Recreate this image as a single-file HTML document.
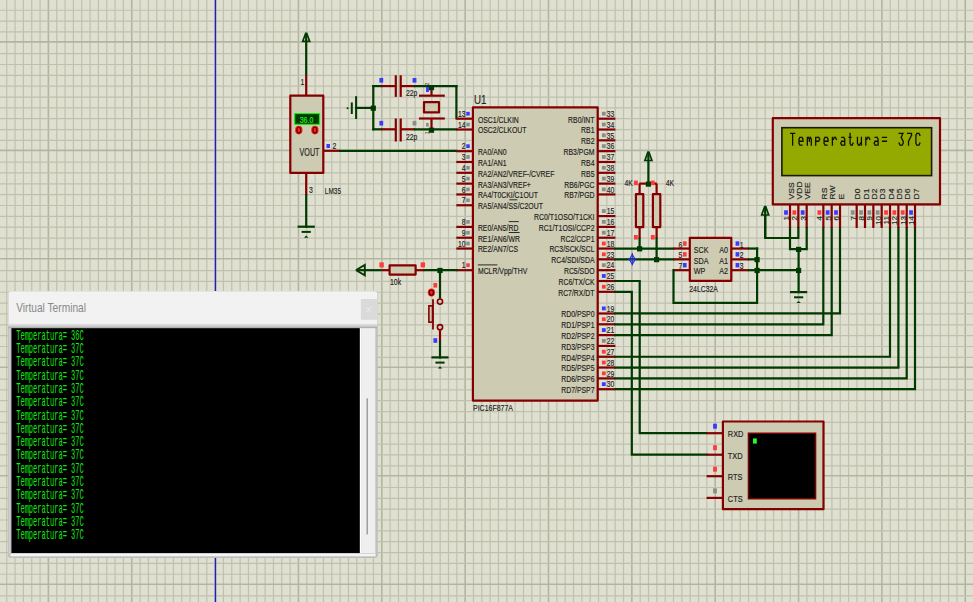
<!DOCTYPE html>
<html><head><meta charset="utf-8"><style>
html,body{margin:0;padding:0;background:#e0e0d1;overflow:hidden}
svg{display:block}
text{font-family:"Liberation Sans", sans-serif}
</style></head><body>
<svg width="973" height="602" viewBox="0 0 973 602">
<rect x="0" y="0" width="973" height="602" fill="#e0e0d1"/>
<line x1="-1.61" y1="0" x2="-1.61" y2="602" stroke="#bfc0ae" stroke-width="1.2"/>
<line x1="6.72" y1="0" x2="6.72" y2="602" stroke="#bfc0ae" stroke-width="1.2"/>
<line x1="15.06" y1="0" x2="15.06" y2="602" stroke="#bfc0ae" stroke-width="1.2"/>
<line x1="23.39" y1="0" x2="23.39" y2="602" stroke="#bfc0ae" stroke-width="1.2"/>
<line x1="31.73" y1="0" x2="31.73" y2="602" stroke="#bfc0ae" stroke-width="1.2"/>
<line x1="40.06" y1="0" x2="40.06" y2="602" stroke="#bfc0ae" stroke-width="1.2"/>
<line x1="48.40" y1="0" x2="48.40" y2="602" stroke="#b3b5a3" stroke-width="1.6"/>
<line x1="56.73" y1="0" x2="56.73" y2="602" stroke="#bfc0ae" stroke-width="1.2"/>
<line x1="65.07" y1="0" x2="65.07" y2="602" stroke="#bfc0ae" stroke-width="1.2"/>
<line x1="73.41" y1="0" x2="73.41" y2="602" stroke="#bfc0ae" stroke-width="1.2"/>
<line x1="81.74" y1="0" x2="81.74" y2="602" stroke="#bfc0ae" stroke-width="1.2"/>
<line x1="90.08" y1="0" x2="90.08" y2="602" stroke="#bfc0ae" stroke-width="1.2"/>
<line x1="98.41" y1="0" x2="98.41" y2="602" stroke="#bfc0ae" stroke-width="1.2"/>
<line x1="106.75" y1="0" x2="106.75" y2="602" stroke="#bfc0ae" stroke-width="1.2"/>
<line x1="115.08" y1="0" x2="115.08" y2="602" stroke="#bfc0ae" stroke-width="1.2"/>
<line x1="123.42" y1="0" x2="123.42" y2="602" stroke="#bfc0ae" stroke-width="1.2"/>
<line x1="131.75" y1="0" x2="131.75" y2="602" stroke="#b3b5a3" stroke-width="1.6"/>
<line x1="140.09" y1="0" x2="140.09" y2="602" stroke="#bfc0ae" stroke-width="1.2"/>
<line x1="148.42" y1="0" x2="148.42" y2="602" stroke="#bfc0ae" stroke-width="1.2"/>
<line x1="156.76" y1="0" x2="156.76" y2="602" stroke="#bfc0ae" stroke-width="1.2"/>
<line x1="165.09" y1="0" x2="165.09" y2="602" stroke="#bfc0ae" stroke-width="1.2"/>
<line x1="173.43" y1="0" x2="173.43" y2="602" stroke="#bfc0ae" stroke-width="1.2"/>
<line x1="181.76" y1="0" x2="181.76" y2="602" stroke="#bfc0ae" stroke-width="1.2"/>
<line x1="190.10" y1="0" x2="190.10" y2="602" stroke="#bfc0ae" stroke-width="1.2"/>
<line x1="198.43" y1="0" x2="198.43" y2="602" stroke="#bfc0ae" stroke-width="1.2"/>
<line x1="206.77" y1="0" x2="206.77" y2="602" stroke="#bfc0ae" stroke-width="1.2"/>
<line x1="215.10" y1="0" x2="215.10" y2="602" stroke="#b3b5a3" stroke-width="1.6"/>
<line x1="223.44" y1="0" x2="223.44" y2="602" stroke="#bfc0ae" stroke-width="1.2"/>
<line x1="231.77" y1="0" x2="231.77" y2="602" stroke="#bfc0ae" stroke-width="1.2"/>
<line x1="240.11" y1="0" x2="240.11" y2="602" stroke="#bfc0ae" stroke-width="1.2"/>
<line x1="248.44" y1="0" x2="248.44" y2="602" stroke="#bfc0ae" stroke-width="1.2"/>
<line x1="256.78" y1="0" x2="256.78" y2="602" stroke="#bfc0ae" stroke-width="1.2"/>
<line x1="265.11" y1="0" x2="265.11" y2="602" stroke="#bfc0ae" stroke-width="1.2"/>
<line x1="273.44" y1="0" x2="273.44" y2="602" stroke="#bfc0ae" stroke-width="1.2"/>
<line x1="281.78" y1="0" x2="281.78" y2="602" stroke="#bfc0ae" stroke-width="1.2"/>
<line x1="290.12" y1="0" x2="290.12" y2="602" stroke="#bfc0ae" stroke-width="1.2"/>
<line x1="298.45" y1="0" x2="298.45" y2="602" stroke="#b3b5a3" stroke-width="1.6"/>
<line x1="306.79" y1="0" x2="306.79" y2="602" stroke="#bfc0ae" stroke-width="1.2"/>
<line x1="315.12" y1="0" x2="315.12" y2="602" stroke="#bfc0ae" stroke-width="1.2"/>
<line x1="323.45" y1="0" x2="323.45" y2="602" stroke="#bfc0ae" stroke-width="1.2"/>
<line x1="331.79" y1="0" x2="331.79" y2="602" stroke="#bfc0ae" stroke-width="1.2"/>
<line x1="340.12" y1="0" x2="340.12" y2="602" stroke="#bfc0ae" stroke-width="1.2"/>
<line x1="348.46" y1="0" x2="348.46" y2="602" stroke="#bfc0ae" stroke-width="1.2"/>
<line x1="356.80" y1="0" x2="356.80" y2="602" stroke="#bfc0ae" stroke-width="1.2"/>
<line x1="365.13" y1="0" x2="365.13" y2="602" stroke="#bfc0ae" stroke-width="1.2"/>
<line x1="373.47" y1="0" x2="373.47" y2="602" stroke="#bfc0ae" stroke-width="1.2"/>
<line x1="381.80" y1="0" x2="381.80" y2="602" stroke="#b3b5a3" stroke-width="1.6"/>
<line x1="390.13" y1="0" x2="390.13" y2="602" stroke="#bfc0ae" stroke-width="1.2"/>
<line x1="398.47" y1="0" x2="398.47" y2="602" stroke="#bfc0ae" stroke-width="1.2"/>
<line x1="406.81" y1="0" x2="406.81" y2="602" stroke="#bfc0ae" stroke-width="1.2"/>
<line x1="415.14" y1="0" x2="415.14" y2="602" stroke="#bfc0ae" stroke-width="1.2"/>
<line x1="423.48" y1="0" x2="423.48" y2="602" stroke="#bfc0ae" stroke-width="1.2"/>
<line x1="431.81" y1="0" x2="431.81" y2="602" stroke="#bfc0ae" stroke-width="1.2"/>
<line x1="440.15" y1="0" x2="440.15" y2="602" stroke="#bfc0ae" stroke-width="1.2"/>
<line x1="448.48" y1="0" x2="448.48" y2="602" stroke="#bfc0ae" stroke-width="1.2"/>
<line x1="456.81" y1="0" x2="456.81" y2="602" stroke="#bfc0ae" stroke-width="1.2"/>
<line x1="465.15" y1="0" x2="465.15" y2="602" stroke="#b3b5a3" stroke-width="1.6"/>
<line x1="473.49" y1="0" x2="473.49" y2="602" stroke="#bfc0ae" stroke-width="1.2"/>
<line x1="481.82" y1="0" x2="481.82" y2="602" stroke="#bfc0ae" stroke-width="1.2"/>
<line x1="490.16" y1="0" x2="490.16" y2="602" stroke="#bfc0ae" stroke-width="1.2"/>
<line x1="498.49" y1="0" x2="498.49" y2="602" stroke="#bfc0ae" stroke-width="1.2"/>
<line x1="506.83" y1="0" x2="506.83" y2="602" stroke="#bfc0ae" stroke-width="1.2"/>
<line x1="515.16" y1="0" x2="515.16" y2="602" stroke="#bfc0ae" stroke-width="1.2"/>
<line x1="523.50" y1="0" x2="523.50" y2="602" stroke="#bfc0ae" stroke-width="1.2"/>
<line x1="531.83" y1="0" x2="531.83" y2="602" stroke="#bfc0ae" stroke-width="1.2"/>
<line x1="540.17" y1="0" x2="540.17" y2="602" stroke="#bfc0ae" stroke-width="1.2"/>
<line x1="548.50" y1="0" x2="548.50" y2="602" stroke="#b3b5a3" stroke-width="1.6"/>
<line x1="556.84" y1="0" x2="556.84" y2="602" stroke="#bfc0ae" stroke-width="1.2"/>
<line x1="565.17" y1="0" x2="565.17" y2="602" stroke="#bfc0ae" stroke-width="1.2"/>
<line x1="573.50" y1="0" x2="573.50" y2="602" stroke="#bfc0ae" stroke-width="1.2"/>
<line x1="581.84" y1="0" x2="581.84" y2="602" stroke="#bfc0ae" stroke-width="1.2"/>
<line x1="590.18" y1="0" x2="590.18" y2="602" stroke="#bfc0ae" stroke-width="1.2"/>
<line x1="598.51" y1="0" x2="598.51" y2="602" stroke="#bfc0ae" stroke-width="1.2"/>
<line x1="606.85" y1="0" x2="606.85" y2="602" stroke="#bfc0ae" stroke-width="1.2"/>
<line x1="615.18" y1="0" x2="615.18" y2="602" stroke="#bfc0ae" stroke-width="1.2"/>
<line x1="623.51" y1="0" x2="623.51" y2="602" stroke="#bfc0ae" stroke-width="1.2"/>
<line x1="631.85" y1="0" x2="631.85" y2="602" stroke="#b3b5a3" stroke-width="1.6"/>
<line x1="640.19" y1="0" x2="640.19" y2="602" stroke="#bfc0ae" stroke-width="1.2"/>
<line x1="648.52" y1="0" x2="648.52" y2="602" stroke="#bfc0ae" stroke-width="1.2"/>
<line x1="656.86" y1="0" x2="656.86" y2="602" stroke="#bfc0ae" stroke-width="1.2"/>
<line x1="665.19" y1="0" x2="665.19" y2="602" stroke="#bfc0ae" stroke-width="1.2"/>
<line x1="673.53" y1="0" x2="673.53" y2="602" stroke="#bfc0ae" stroke-width="1.2"/>
<line x1="681.86" y1="0" x2="681.86" y2="602" stroke="#bfc0ae" stroke-width="1.2"/>
<line x1="690.20" y1="0" x2="690.20" y2="602" stroke="#bfc0ae" stroke-width="1.2"/>
<line x1="698.53" y1="0" x2="698.53" y2="602" stroke="#bfc0ae" stroke-width="1.2"/>
<line x1="706.87" y1="0" x2="706.87" y2="602" stroke="#bfc0ae" stroke-width="1.2"/>
<line x1="715.20" y1="0" x2="715.20" y2="602" stroke="#b3b5a3" stroke-width="1.6"/>
<line x1="723.54" y1="0" x2="723.54" y2="602" stroke="#bfc0ae" stroke-width="1.2"/>
<line x1="731.87" y1="0" x2="731.87" y2="602" stroke="#bfc0ae" stroke-width="1.2"/>
<line x1="740.21" y1="0" x2="740.21" y2="602" stroke="#bfc0ae" stroke-width="1.2"/>
<line x1="748.54" y1="0" x2="748.54" y2="602" stroke="#bfc0ae" stroke-width="1.2"/>
<line x1="756.88" y1="0" x2="756.88" y2="602" stroke="#bfc0ae" stroke-width="1.2"/>
<line x1="765.21" y1="0" x2="765.21" y2="602" stroke="#bfc0ae" stroke-width="1.2"/>
<line x1="773.55" y1="0" x2="773.55" y2="602" stroke="#bfc0ae" stroke-width="1.2"/>
<line x1="781.88" y1="0" x2="781.88" y2="602" stroke="#bfc0ae" stroke-width="1.2"/>
<line x1="790.22" y1="0" x2="790.22" y2="602" stroke="#bfc0ae" stroke-width="1.2"/>
<line x1="798.55" y1="0" x2="798.55" y2="602" stroke="#b3b5a3" stroke-width="1.6"/>
<line x1="806.89" y1="0" x2="806.89" y2="602" stroke="#bfc0ae" stroke-width="1.2"/>
<line x1="815.22" y1="0" x2="815.22" y2="602" stroke="#bfc0ae" stroke-width="1.2"/>
<line x1="823.56" y1="0" x2="823.56" y2="602" stroke="#bfc0ae" stroke-width="1.2"/>
<line x1="831.89" y1="0" x2="831.89" y2="602" stroke="#bfc0ae" stroke-width="1.2"/>
<line x1="840.23" y1="0" x2="840.23" y2="602" stroke="#bfc0ae" stroke-width="1.2"/>
<line x1="848.56" y1="0" x2="848.56" y2="602" stroke="#bfc0ae" stroke-width="1.2"/>
<line x1="856.90" y1="0" x2="856.90" y2="602" stroke="#bfc0ae" stroke-width="1.2"/>
<line x1="865.23" y1="0" x2="865.23" y2="602" stroke="#bfc0ae" stroke-width="1.2"/>
<line x1="873.57" y1="0" x2="873.57" y2="602" stroke="#bfc0ae" stroke-width="1.2"/>
<line x1="881.90" y1="0" x2="881.90" y2="602" stroke="#b3b5a3" stroke-width="1.6"/>
<line x1="890.24" y1="0" x2="890.24" y2="602" stroke="#bfc0ae" stroke-width="1.2"/>
<line x1="898.57" y1="0" x2="898.57" y2="602" stroke="#bfc0ae" stroke-width="1.2"/>
<line x1="906.91" y1="0" x2="906.91" y2="602" stroke="#bfc0ae" stroke-width="1.2"/>
<line x1="915.24" y1="0" x2="915.24" y2="602" stroke="#bfc0ae" stroke-width="1.2"/>
<line x1="923.58" y1="0" x2="923.58" y2="602" stroke="#bfc0ae" stroke-width="1.2"/>
<line x1="931.91" y1="0" x2="931.91" y2="602" stroke="#bfc0ae" stroke-width="1.2"/>
<line x1="940.25" y1="0" x2="940.25" y2="602" stroke="#bfc0ae" stroke-width="1.2"/>
<line x1="948.58" y1="0" x2="948.58" y2="602" stroke="#bfc0ae" stroke-width="1.2"/>
<line x1="956.92" y1="0" x2="956.92" y2="602" stroke="#bfc0ae" stroke-width="1.2"/>
<line x1="965.25" y1="0" x2="965.25" y2="602" stroke="#b3b5a3" stroke-width="1.6"/>
<line x1="973.59" y1="0" x2="973.59" y2="602" stroke="#bfc0ae" stroke-width="1.2"/>
<line x1="0" y1="-0.58" x2="973" y2="-0.58" stroke="#bfc0ae" stroke-width="1.2"/>
<line x1="0" y1="10.26" x2="973" y2="10.26" stroke="#bfc0ae" stroke-width="1.2"/>
<line x1="0" y1="21.11" x2="973" y2="21.11" stroke="#bfc0ae" stroke-width="1.2"/>
<line x1="0" y1="31.95" x2="973" y2="31.95" stroke="#bfc0ae" stroke-width="1.2"/>
<line x1="0" y1="41.90" x2="973" y2="41.90" stroke="#b3b5a3" stroke-width="1.6"/>
<line x1="0" y1="53.65" x2="973" y2="53.65" stroke="#bfc0ae" stroke-width="1.2"/>
<line x1="0" y1="64.49" x2="973" y2="64.49" stroke="#bfc0ae" stroke-width="1.2"/>
<line x1="0" y1="75.34" x2="973" y2="75.34" stroke="#bfc0ae" stroke-width="1.2"/>
<line x1="0" y1="86.18" x2="973" y2="86.18" stroke="#bfc0ae" stroke-width="1.2"/>
<line x1="0" y1="97.03" x2="973" y2="97.03" stroke="#bfc0ae" stroke-width="1.2"/>
<line x1="0" y1="107.88" x2="973" y2="107.88" stroke="#bfc0ae" stroke-width="1.2"/>
<line x1="0" y1="118.72" x2="973" y2="118.72" stroke="#bfc0ae" stroke-width="1.2"/>
<line x1="0" y1="129.57" x2="973" y2="129.57" stroke="#bfc0ae" stroke-width="1.2"/>
<line x1="0" y1="140.41" x2="973" y2="140.41" stroke="#bfc0ae" stroke-width="1.2"/>
<line x1="0" y1="150.36" x2="973" y2="150.36" stroke="#b3b5a3" stroke-width="1.6"/>
<line x1="0" y1="162.11" x2="973" y2="162.11" stroke="#bfc0ae" stroke-width="1.2"/>
<line x1="0" y1="172.95" x2="973" y2="172.95" stroke="#bfc0ae" stroke-width="1.2"/>
<line x1="0" y1="183.80" x2="973" y2="183.80" stroke="#bfc0ae" stroke-width="1.2"/>
<line x1="0" y1="194.64" x2="973" y2="194.64" stroke="#bfc0ae" stroke-width="1.2"/>
<line x1="0" y1="205.49" x2="973" y2="205.49" stroke="#bfc0ae" stroke-width="1.2"/>
<line x1="0" y1="216.34" x2="973" y2="216.34" stroke="#bfc0ae" stroke-width="1.2"/>
<line x1="0" y1="227.18" x2="973" y2="227.18" stroke="#bfc0ae" stroke-width="1.2"/>
<line x1="0" y1="238.03" x2="973" y2="238.03" stroke="#bfc0ae" stroke-width="1.2"/>
<line x1="0" y1="248.87" x2="973" y2="248.87" stroke="#bfc0ae" stroke-width="1.2"/>
<line x1="0" y1="258.82" x2="973" y2="258.82" stroke="#b3b5a3" stroke-width="1.6"/>
<line x1="0" y1="270.57" x2="973" y2="270.57" stroke="#bfc0ae" stroke-width="1.2"/>
<line x1="0" y1="281.41" x2="973" y2="281.41" stroke="#bfc0ae" stroke-width="1.2"/>
<line x1="0" y1="292.26" x2="973" y2="292.26" stroke="#bfc0ae" stroke-width="1.2"/>
<line x1="0" y1="303.10" x2="973" y2="303.10" stroke="#bfc0ae" stroke-width="1.2"/>
<line x1="0" y1="313.95" x2="973" y2="313.95" stroke="#bfc0ae" stroke-width="1.2"/>
<line x1="0" y1="324.80" x2="973" y2="324.80" stroke="#bfc0ae" stroke-width="1.2"/>
<line x1="0" y1="335.64" x2="973" y2="335.64" stroke="#bfc0ae" stroke-width="1.2"/>
<line x1="0" y1="346.49" x2="973" y2="346.49" stroke="#bfc0ae" stroke-width="1.2"/>
<line x1="0" y1="357.33" x2="973" y2="357.33" stroke="#bfc0ae" stroke-width="1.2"/>
<line x1="0" y1="367.28" x2="973" y2="367.28" stroke="#b3b5a3" stroke-width="1.6"/>
<line x1="0" y1="379.03" x2="973" y2="379.03" stroke="#bfc0ae" stroke-width="1.2"/>
<line x1="0" y1="389.87" x2="973" y2="389.87" stroke="#bfc0ae" stroke-width="1.2"/>
<line x1="0" y1="400.72" x2="973" y2="400.72" stroke="#bfc0ae" stroke-width="1.2"/>
<line x1="0" y1="411.56" x2="973" y2="411.56" stroke="#bfc0ae" stroke-width="1.2"/>
<line x1="0" y1="422.41" x2="973" y2="422.41" stroke="#bfc0ae" stroke-width="1.2"/>
<line x1="0" y1="433.26" x2="973" y2="433.26" stroke="#bfc0ae" stroke-width="1.2"/>
<line x1="0" y1="444.10" x2="973" y2="444.10" stroke="#bfc0ae" stroke-width="1.2"/>
<line x1="0" y1="454.95" x2="973" y2="454.95" stroke="#bfc0ae" stroke-width="1.2"/>
<line x1="0" y1="465.79" x2="973" y2="465.79" stroke="#bfc0ae" stroke-width="1.2"/>
<line x1="0" y1="475.74" x2="973" y2="475.74" stroke="#b3b5a3" stroke-width="1.6"/>
<line x1="0" y1="487.49" x2="973" y2="487.49" stroke="#bfc0ae" stroke-width="1.2"/>
<line x1="0" y1="498.33" x2="973" y2="498.33" stroke="#bfc0ae" stroke-width="1.2"/>
<line x1="0" y1="509.18" x2="973" y2="509.18" stroke="#bfc0ae" stroke-width="1.2"/>
<line x1="0" y1="520.02" x2="973" y2="520.02" stroke="#bfc0ae" stroke-width="1.2"/>
<line x1="0" y1="530.87" x2="973" y2="530.87" stroke="#bfc0ae" stroke-width="1.2"/>
<line x1="0" y1="541.72" x2="973" y2="541.72" stroke="#bfc0ae" stroke-width="1.2"/>
<line x1="0" y1="552.56" x2="973" y2="552.56" stroke="#bfc0ae" stroke-width="1.2"/>
<line x1="0" y1="563.41" x2="973" y2="563.41" stroke="#bfc0ae" stroke-width="1.2"/>
<line x1="0" y1="574.25" x2="973" y2="574.25" stroke="#bfc0ae" stroke-width="1.2"/>
<line x1="0" y1="584.20" x2="973" y2="584.20" stroke="#b3b5a3" stroke-width="1.6"/>
<line x1="0" y1="595.95" x2="973" y2="595.95" stroke="#bfc0ae" stroke-width="1.2"/>
<line x1="215.5" y1="0" x2="215.5" y2="602" stroke="#1e1ec0" stroke-width="1.4"/>
<line x1="306.20" y1="33.50" x2="306.20" y2="75.00" stroke="#003a00" stroke-width="2.2" stroke-linecap="butt"/>
<polygon points="305.70,33.30 306.70,33.30 309.70,41.30 302.70,41.30" fill="none" stroke="#003a00" stroke-width="1.7"/>
<line x1="306.20" y1="75.00" x2="306.20" y2="95.70" stroke="#840000" stroke-width="2.2" stroke-linecap="butt"/>
<text transform="translate(304.40,84.50) scale(0.8,1)" font-size="8.5" text-anchor="end" fill="#222222" stroke="#222222" stroke-width="0.15" >1</text>
<rect x="290.30" y="95.70" width="33.00" height="77.20" fill="#cdcbb1" stroke="#840000" stroke-width="2.2" stroke-linejoin="round"/>
<rect x="294.7" y="113.6" width="24.8" height="10.7" fill="#003a00" stroke="#10f010" stroke-width="1.1"/>
<text transform="translate(306.60,122.80) scale(0.76,1)" font-size="9.4" text-anchor="middle" fill="#20f020" stroke="#20f020" stroke-width="0.15" >36.0</text>
<ellipse cx="298.8" cy="130.1" rx="3.7" ry="4.3" fill="#ff1818"/>
<ellipse cx="298.8" cy="130.1" rx="1.9" ry="2.9" fill="#ff2020" stroke="#400000" stroke-width="1.1"/>
<ellipse cx="314.9" cy="130.1" rx="3.7" ry="4.3" fill="#ff1818"/>
<ellipse cx="314.9" cy="130.1" rx="1.9" ry="2.9" fill="#ff2020" stroke="#400000" stroke-width="1.1"/>
<text transform="translate(319.50,155.80) scale(0.72,1)" font-size="10" text-anchor="end" fill="#222222" stroke="#222222" stroke-width="0.15" >VOUT</text>
<line x1="323.30" y1="150.80" x2="340.00" y2="150.80" stroke="#840000" stroke-width="2.2" stroke-linecap="butt"/>
<line x1="340.00" y1="150.80" x2="456.30" y2="150.80" stroke="#003a00" stroke-width="2.2" stroke-linecap="square"/>
<rect x="326.45" y="144.00" width="3.50" height="4.00" fill="#3a3aff"/>
<text transform="translate(332.50,149.30) scale(0.82,1)" font-size="8.5" text-anchor="start" fill="#222222" stroke="#222222" stroke-width="0.15" >2</text>
<line x1="306.20" y1="172.90" x2="306.20" y2="195.20" stroke="#840000" stroke-width="2.2" stroke-linecap="butt"/>
<line x1="306.20" y1="195.20" x2="306.20" y2="226.70" stroke="#003a00" stroke-width="2.2" stroke-linecap="square"/>
<line x1="297.60" y1="226.70" x2="314.80" y2="226.70" stroke="#003a00" stroke-width="2.2" stroke-linecap="butt"/>
<line x1="301.60" y1="231.90" x2="310.80" y2="231.90" stroke="#003a00" stroke-width="2.0" stroke-linecap="butt"/>
<polygon points="306.20,235.50 304.00,237.70 308.40,237.70" fill="#003a00"/>
<text transform="translate(309.00,192.60) scale(0.82,1)" font-size="8.5" text-anchor="start" fill="#222222" stroke="#222222" stroke-width="0.15" >3</text>
<text transform="translate(324.80,194.20) scale(0.72,1)" font-size="9" text-anchor="start" fill="#222222" stroke="#222222" stroke-width="0.15" >LM35</text>
<line x1="351.80" y1="102.40" x2="351.80" y2="114.00" stroke="#003a00" stroke-width="2" stroke-linecap="butt"/>
<line x1="356.10" y1="96.20" x2="356.10" y2="119.00" stroke="#003a00" stroke-width="2" stroke-linecap="butt"/>
<rect x="346.70" y="107.30" width="1.80" height="1.80" fill="#003a00"/>
<line x1="356.10" y1="107.90" x2="373.30" y2="107.90" stroke="#003a00" stroke-width="2.2" stroke-linecap="square"/>
<rect x="370.70" y="105.60" width="5.20" height="5.20" fill="#003a00"/>
<line x1="373.30" y1="86.10" x2="373.30" y2="129.30" stroke="#003a00" stroke-width="2.2" stroke-linecap="square"/>
<line x1="373.30" y1="86.10" x2="381.30" y2="86.10" stroke="#003a00" stroke-width="2.2" stroke-linecap="square"/>
<line x1="381.30" y1="86.10" x2="395.80" y2="86.10" stroke="#840000" stroke-width="2.2" stroke-linecap="butt"/>
<line x1="395.80" y1="75.30" x2="395.80" y2="96.90" stroke="#840000" stroke-width="2.2" stroke-linecap="butt"/>
<line x1="400.70" y1="75.30" x2="400.70" y2="96.90" stroke="#840000" stroke-width="2.2" stroke-linecap="butt"/>
<line x1="400.70" y1="86.10" x2="414.90" y2="86.10" stroke="#840000" stroke-width="2.2" stroke-linecap="butt"/>
<line x1="414.90" y1="86.10" x2="456.40" y2="86.10" stroke="#003a00" stroke-width="2.2" stroke-linecap="square"/>
<line x1="373.30" y1="129.30" x2="381.30" y2="129.30" stroke="#003a00" stroke-width="2.2" stroke-linecap="square"/>
<line x1="381.30" y1="129.30" x2="395.80" y2="129.30" stroke="#840000" stroke-width="2.2" stroke-linecap="butt"/>
<line x1="395.80" y1="118.50" x2="395.80" y2="141.50" stroke="#840000" stroke-width="2.2" stroke-linecap="butt"/>
<line x1="400.70" y1="118.50" x2="400.70" y2="141.50" stroke="#840000" stroke-width="2.2" stroke-linecap="butt"/>
<line x1="400.70" y1="129.30" x2="414.90" y2="129.30" stroke="#840000" stroke-width="2.2" stroke-linecap="butt"/>
<line x1="414.90" y1="129.30" x2="456.40" y2="129.30" stroke="#003a00" stroke-width="2.2" stroke-linecap="square"/>
<line x1="456.40" y1="86.10" x2="456.40" y2="118.30" stroke="#003a00" stroke-width="2.2" stroke-linecap="square"/>
<text transform="translate(406.00,96.30) scale(0.8,1)" font-size="8.5" text-anchor="start" fill="#222222" stroke="#222222" stroke-width="0.15" >22p</text>
<text transform="translate(406.00,140.30) scale(0.8,1)" font-size="8.5" text-anchor="start" fill="#222222" stroke="#222222" stroke-width="0.15" >22p</text>
<line x1="431.50" y1="86.10" x2="431.50" y2="95.70" stroke="#840000" stroke-width="2.2" stroke-linecap="butt"/>
<line x1="419.00" y1="95.70" x2="444.80" y2="95.70" stroke="#840000" stroke-width="2.2" stroke-linecap="butt"/>
<rect x="424.00" y="102.20" width="15.00" height="10.20" fill="#cdcbb1" stroke="#840000" stroke-width="2.2" stroke-linejoin="round"/>
<line x1="419.00" y1="118.50" x2="444.80" y2="118.50" stroke="#840000" stroke-width="2.2" stroke-linecap="butt"/>
<line x1="431.50" y1="118.50" x2="431.50" y2="129.30" stroke="#840000" stroke-width="2.2" stroke-linecap="butt"/>
<rect x="428.90" y="85.00" width="5.20" height="5.20" fill="#003a00"/>
<rect x="428.90" y="127.60" width="5.20" height="5.20" fill="#003a00"/>
<rect x="379.40" y="78.00" width="3.80" height="4.60" fill="#3a3aff"/>
<rect x="412.60" y="78.00" width="3.80" height="4.60" fill="#3a3aff"/>
<rect x="379.40" y="120.90" width="3.80" height="4.60" fill="#3a3aff"/>
<rect x="412.60" y="120.90" width="3.80" height="4.60" fill="#8c8c8c"/>
<rect x="426.05" y="87.00" width="2.90" height="5.00" fill="#3a3aff"/>
<rect x="426.10" y="122.95" width="2.60" height="3.70" fill="#8c8c8c"/>
<text transform="translate(429.40,85.40) rotate(-90) scale(0.9,1)" font-size="5.6" text-anchor="start" fill="#555" stroke="#555" stroke-width="0.15" >2</text>
<text transform="translate(429.00,134.20) rotate(-90) scale(0.9,1)" font-size="5.3" text-anchor="start" fill="#333" stroke="#333" stroke-width="0.15" >1</text>
<text transform="translate(473.90,104.30) scale(0.78,1)" font-size="12.5" text-anchor="start" fill="#222222" stroke="#222222" stroke-width="0.15" >U1</text>
<rect x="472.90" y="107.40" width="124.80" height="293.20" fill="#cdcbb1" stroke="#840000" stroke-width="2.2" stroke-linejoin="round"/>
<line x1="456.30" y1="118.70" x2="472.90" y2="118.70" stroke="#840000" stroke-width="2.2" stroke-linecap="butt"/>
<rect x="466.25" y="111.85" width="3.50" height="3.70" fill="#3a3aff"/>
<text transform="translate(465.60,116.90) scale(0.8,1)" font-size="8.5" text-anchor="end" fill="#222" stroke="#222" stroke-width="0.15" >13</text>
<text transform="translate(477.90,122.60) scale(0.82,1)" font-size="8.4" text-anchor="start" fill="#222222" stroke="#222222" stroke-width="0.15" >OSC1/CLKIN</text>
<line x1="456.30" y1="129.52" x2="472.90" y2="129.52" stroke="#840000" stroke-width="2.2" stroke-linecap="butt"/>
<rect x="466.25" y="122.67" width="3.50" height="3.70" fill="#8c8c8c"/>
<text transform="translate(465.60,127.72) scale(0.8,1)" font-size="8.5" text-anchor="end" fill="#222" stroke="#222" stroke-width="0.15" >14</text>
<text transform="translate(477.90,133.42) scale(0.82,1)" font-size="8.4" text-anchor="start" fill="#222222" stroke="#222222" stroke-width="0.15" >OSC2/CLKOUT</text>
<line x1="456.30" y1="151.16" x2="472.90" y2="151.16" stroke="#840000" stroke-width="2.2" stroke-linecap="butt"/>
<rect x="466.25" y="144.31" width="3.50" height="3.70" fill="#3a3aff"/>
<text transform="translate(465.60,149.36) scale(0.8,1)" font-size="8.5" text-anchor="end" fill="#222" stroke="#222" stroke-width="0.15" >2</text>
<text transform="translate(477.90,155.06) scale(0.82,1)" font-size="8.4" text-anchor="start" fill="#222222" stroke="#222222" stroke-width="0.15" >RA0/AN0</text>
<line x1="456.30" y1="161.98" x2="472.90" y2="161.98" stroke="#840000" stroke-width="2.2" stroke-linecap="butt"/>
<rect x="466.25" y="155.13" width="3.50" height="3.70" fill="#8c8c8c"/>
<text transform="translate(465.60,160.18) scale(0.8,1)" font-size="8.5" text-anchor="end" fill="#222" stroke="#222" stroke-width="0.15" >3</text>
<text transform="translate(477.90,165.88) scale(0.82,1)" font-size="8.4" text-anchor="start" fill="#222222" stroke="#222222" stroke-width="0.15" >RA1/AN1</text>
<line x1="456.30" y1="172.80" x2="472.90" y2="172.80" stroke="#840000" stroke-width="2.2" stroke-linecap="butt"/>
<rect x="466.25" y="165.95" width="3.50" height="3.70" fill="#8c8c8c"/>
<text transform="translate(465.60,171.00) scale(0.8,1)" font-size="8.5" text-anchor="end" fill="#222" stroke="#222" stroke-width="0.15" >4</text>
<text transform="translate(477.90,176.70) scale(0.82,1)" font-size="8.4" text-anchor="start" fill="#222222" stroke="#222222" stroke-width="0.15" >RA2/AN2/VREF-/CVREF</text>
<line x1="456.30" y1="183.62" x2="472.90" y2="183.62" stroke="#840000" stroke-width="2.2" stroke-linecap="butt"/>
<rect x="466.25" y="176.77" width="3.50" height="3.70" fill="#8c8c8c"/>
<text transform="translate(465.60,181.82) scale(0.8,1)" font-size="8.5" text-anchor="end" fill="#222" stroke="#222" stroke-width="0.15" >5</text>
<text transform="translate(477.90,187.52) scale(0.82,1)" font-size="8.4" text-anchor="start" fill="#222222" stroke="#222222" stroke-width="0.15" >RA3/AN3/VREF+</text>
<line x1="456.30" y1="194.44" x2="472.90" y2="194.44" stroke="#840000" stroke-width="2.2" stroke-linecap="butt"/>
<rect x="466.25" y="187.59" width="3.50" height="3.70" fill="#8c8c8c"/>
<text transform="translate(465.60,192.64) scale(0.8,1)" font-size="8.5" text-anchor="end" fill="#222" stroke="#222" stroke-width="0.15" >6</text>
<text transform="translate(477.90,198.34) scale(0.82,1)" font-size="8.4" text-anchor="start" fill="#222222" stroke="#222222" stroke-width="0.15" >RA4/T0CKI/C1OUT</text>
<line x1="456.30" y1="205.26" x2="472.90" y2="205.26" stroke="#840000" stroke-width="2.2" stroke-linecap="butt"/>
<rect x="466.25" y="198.41" width="3.50" height="3.70" fill="#8c8c8c"/>
<text transform="translate(465.60,203.46) scale(0.8,1)" font-size="8.5" text-anchor="end" fill="#222" stroke="#222" stroke-width="0.15" >7</text>
<text transform="translate(477.90,209.16) scale(0.82,1)" font-size="8.4" text-anchor="start" fill="#222222" stroke="#222222" stroke-width="0.15" >RA5/AN4/SS/C2OUT</text>
<line x1="456.30" y1="226.90" x2="472.90" y2="226.90" stroke="#840000" stroke-width="2.2" stroke-linecap="butt"/>
<rect x="466.25" y="220.05" width="3.50" height="3.70" fill="#8c8c8c"/>
<text transform="translate(465.60,225.10) scale(0.8,1)" font-size="8.5" text-anchor="end" fill="#222" stroke="#222" stroke-width="0.15" >8</text>
<text transform="translate(477.90,230.80) scale(0.82,1)" font-size="8.4" text-anchor="start" fill="#222222" stroke="#222222" stroke-width="0.15" >RE0/AN5/RD</text>
<line x1="456.30" y1="237.72" x2="472.90" y2="237.72" stroke="#840000" stroke-width="2.2" stroke-linecap="butt"/>
<rect x="466.25" y="230.87" width="3.50" height="3.70" fill="#8c8c8c"/>
<text transform="translate(465.60,235.92) scale(0.8,1)" font-size="8.5" text-anchor="end" fill="#222" stroke="#222" stroke-width="0.15" >9</text>
<text transform="translate(477.90,241.62) scale(0.82,1)" font-size="8.4" text-anchor="start" fill="#222222" stroke="#222222" stroke-width="0.15" >RE1/AN6/WR</text>
<line x1="456.30" y1="248.54" x2="472.90" y2="248.54" stroke="#840000" stroke-width="2.2" stroke-linecap="butt"/>
<rect x="466.25" y="241.69" width="3.50" height="3.70" fill="#8c8c8c"/>
<text transform="translate(465.60,246.74) scale(0.8,1)" font-size="8.5" text-anchor="end" fill="#222" stroke="#222" stroke-width="0.15" >10</text>
<text transform="translate(477.90,252.44) scale(0.82,1)" font-size="8.4" text-anchor="start" fill="#222222" stroke="#222222" stroke-width="0.15" >RE2/AN7/CS</text>
<line x1="456.30" y1="270.18" x2="472.90" y2="270.18" stroke="#840000" stroke-width="2.2" stroke-linecap="butt"/>
<rect x="466.25" y="263.33" width="3.50" height="3.70" fill="#ff3a3a"/>
<text transform="translate(465.60,268.38) scale(0.8,1)" font-size="8.5" text-anchor="end" fill="#222" stroke="#222" stroke-width="0.15" >1</text>
<text transform="translate(477.90,274.08) scale(0.82,1)" font-size="8.4" text-anchor="start" fill="#222222" stroke="#222222" stroke-width="0.15" >MCLR/Vpp/THV</text>
<line x1="597.70" y1="118.70" x2="615.40" y2="118.70" stroke="#840000" stroke-width="2.2" stroke-linecap="butt"/>
<rect x="601.90" y="111.75" width="3.80" height="3.80" fill="#8c8c8c"/>
<text transform="translate(606.80,116.90) scale(0.8,1)" font-size="8.5" text-anchor="start" fill="#222" stroke="#222" stroke-width="0.15" >33</text>
<text transform="translate(594.50,122.60) scale(0.82,1)" font-size="8.4" text-anchor="end" fill="#222222" stroke="#222222" stroke-width="0.15" >RB0/INT</text>
<line x1="597.70" y1="129.52" x2="615.40" y2="129.52" stroke="#840000" stroke-width="2.2" stroke-linecap="butt"/>
<rect x="601.90" y="122.57" width="3.80" height="3.80" fill="#8c8c8c"/>
<text transform="translate(606.80,127.72) scale(0.8,1)" font-size="8.5" text-anchor="start" fill="#222" stroke="#222" stroke-width="0.15" >34</text>
<text transform="translate(594.50,133.42) scale(0.82,1)" font-size="8.4" text-anchor="end" fill="#222222" stroke="#222222" stroke-width="0.15" >RB1</text>
<line x1="597.70" y1="140.34" x2="615.40" y2="140.34" stroke="#840000" stroke-width="2.2" stroke-linecap="butt"/>
<rect x="601.90" y="133.39" width="3.80" height="3.80" fill="#8c8c8c"/>
<text transform="translate(606.80,138.54) scale(0.8,1)" font-size="8.5" text-anchor="start" fill="#222" stroke="#222" stroke-width="0.15" >35</text>
<text transform="translate(594.50,144.24) scale(0.82,1)" font-size="8.4" text-anchor="end" fill="#222222" stroke="#222222" stroke-width="0.15" >RB2</text>
<line x1="597.70" y1="151.16" x2="615.40" y2="151.16" stroke="#840000" stroke-width="2.2" stroke-linecap="butt"/>
<rect x="601.90" y="144.21" width="3.80" height="3.80" fill="#8c8c8c"/>
<text transform="translate(606.80,149.36) scale(0.8,1)" font-size="8.5" text-anchor="start" fill="#222" stroke="#222" stroke-width="0.15" >36</text>
<text transform="translate(594.50,155.06) scale(0.82,1)" font-size="8.4" text-anchor="end" fill="#222222" stroke="#222222" stroke-width="0.15" >RB3/PGM</text>
<line x1="597.70" y1="161.98" x2="615.40" y2="161.98" stroke="#840000" stroke-width="2.2" stroke-linecap="butt"/>
<rect x="601.90" y="155.03" width="3.80" height="3.80" fill="#8c8c8c"/>
<text transform="translate(606.80,160.18) scale(0.8,1)" font-size="8.5" text-anchor="start" fill="#222" stroke="#222" stroke-width="0.15" >37</text>
<text transform="translate(594.50,165.88) scale(0.82,1)" font-size="8.4" text-anchor="end" fill="#222222" stroke="#222222" stroke-width="0.15" >RB4</text>
<line x1="597.70" y1="172.80" x2="615.40" y2="172.80" stroke="#840000" stroke-width="2.2" stroke-linecap="butt"/>
<rect x="601.90" y="165.85" width="3.80" height="3.80" fill="#8c8c8c"/>
<text transform="translate(606.80,171.00) scale(0.8,1)" font-size="8.5" text-anchor="start" fill="#222" stroke="#222" stroke-width="0.15" >38</text>
<text transform="translate(594.50,176.70) scale(0.82,1)" font-size="8.4" text-anchor="end" fill="#222222" stroke="#222222" stroke-width="0.15" >RB5</text>
<line x1="597.70" y1="183.62" x2="615.40" y2="183.62" stroke="#840000" stroke-width="2.2" stroke-linecap="butt"/>
<rect x="601.90" y="176.67" width="3.80" height="3.80" fill="#8c8c8c"/>
<text transform="translate(606.80,181.82) scale(0.8,1)" font-size="8.5" text-anchor="start" fill="#222" stroke="#222" stroke-width="0.15" >39</text>
<text transform="translate(594.50,187.52) scale(0.82,1)" font-size="8.4" text-anchor="end" fill="#222222" stroke="#222222" stroke-width="0.15" >RB6/PGC</text>
<line x1="597.70" y1="194.44" x2="615.40" y2="194.44" stroke="#840000" stroke-width="2.2" stroke-linecap="butt"/>
<rect x="601.90" y="187.49" width="3.80" height="3.80" fill="#8c8c8c"/>
<text transform="translate(606.80,192.64) scale(0.8,1)" font-size="8.5" text-anchor="start" fill="#222" stroke="#222" stroke-width="0.15" >40</text>
<text transform="translate(594.50,198.34) scale(0.82,1)" font-size="8.4" text-anchor="end" fill="#222222" stroke="#222222" stroke-width="0.15" >RB7/PGD</text>
<line x1="597.70" y1="216.08" x2="615.40" y2="216.08" stroke="#840000" stroke-width="2.2" stroke-linecap="butt"/>
<rect x="601.90" y="209.13" width="3.80" height="3.80" fill="#8c8c8c"/>
<text transform="translate(606.80,214.28) scale(0.8,1)" font-size="8.5" text-anchor="start" fill="#222" stroke="#222" stroke-width="0.15" >15</text>
<text transform="translate(594.50,219.98) scale(0.82,1)" font-size="8.4" text-anchor="end" fill="#222222" stroke="#222222" stroke-width="0.15" >RC0/T1OSO/T1CKI</text>
<line x1="597.70" y1="226.90" x2="615.40" y2="226.90" stroke="#840000" stroke-width="2.2" stroke-linecap="butt"/>
<rect x="601.90" y="219.95" width="3.80" height="3.80" fill="#8c8c8c"/>
<text transform="translate(606.80,225.10) scale(0.8,1)" font-size="8.5" text-anchor="start" fill="#222" stroke="#222" stroke-width="0.15" >16</text>
<text transform="translate(594.50,230.80) scale(0.82,1)" font-size="8.4" text-anchor="end" fill="#222222" stroke="#222222" stroke-width="0.15" >RC1/T1OSI/CCP2</text>
<line x1="597.70" y1="237.72" x2="615.40" y2="237.72" stroke="#840000" stroke-width="2.2" stroke-linecap="butt"/>
<rect x="601.90" y="230.77" width="3.80" height="3.80" fill="#8c8c8c"/>
<text transform="translate(606.80,235.92) scale(0.8,1)" font-size="8.5" text-anchor="start" fill="#222" stroke="#222" stroke-width="0.15" >17</text>
<text transform="translate(594.50,241.62) scale(0.82,1)" font-size="8.4" text-anchor="end" fill="#222222" stroke="#222222" stroke-width="0.15" >RC2/CCP1</text>
<line x1="597.70" y1="248.54" x2="615.40" y2="248.54" stroke="#840000" stroke-width="2.2" stroke-linecap="butt"/>
<rect x="601.90" y="241.59" width="3.80" height="3.80" fill="#ff3a3a"/>
<text transform="translate(606.80,246.74) scale(0.8,1)" font-size="8.5" text-anchor="start" fill="#222" stroke="#222" stroke-width="0.15" >18</text>
<text transform="translate(594.50,252.44) scale(0.82,1)" font-size="8.4" text-anchor="end" fill="#222222" stroke="#222222" stroke-width="0.15" >RC3/SCK/SCL</text>
<line x1="597.70" y1="259.36" x2="615.40" y2="259.36" stroke="#840000" stroke-width="2.2" stroke-linecap="butt"/>
<rect x="601.90" y="252.41" width="3.80" height="3.80" fill="#ff3a3a"/>
<text transform="translate(606.80,257.56) scale(0.8,1)" font-size="8.5" text-anchor="start" fill="#222" stroke="#222" stroke-width="0.15" >23</text>
<text transform="translate(594.50,263.26) scale(0.82,1)" font-size="8.4" text-anchor="end" fill="#222222" stroke="#222222" stroke-width="0.15" >RC4/SDI/SDA</text>
<line x1="597.70" y1="270.18" x2="615.40" y2="270.18" stroke="#840000" stroke-width="2.2" stroke-linecap="butt"/>
<rect x="601.90" y="263.23" width="3.80" height="3.80" fill="#8c8c8c"/>
<text transform="translate(606.80,268.38) scale(0.8,1)" font-size="8.5" text-anchor="start" fill="#222" stroke="#222" stroke-width="0.15" >24</text>
<text transform="translate(594.50,274.08) scale(0.82,1)" font-size="8.4" text-anchor="end" fill="#222222" stroke="#222222" stroke-width="0.15" >RC5/SDO</text>
<line x1="597.70" y1="281.00" x2="615.40" y2="281.00" stroke="#840000" stroke-width="2.2" stroke-linecap="butt"/>
<rect x="601.90" y="274.05" width="3.80" height="3.80" fill="#3a3aff"/>
<text transform="translate(606.80,279.20) scale(0.8,1)" font-size="8.5" text-anchor="start" fill="#222" stroke="#222" stroke-width="0.15" >25</text>
<text transform="translate(594.50,284.90) scale(0.82,1)" font-size="8.4" text-anchor="end" fill="#222222" stroke="#222222" stroke-width="0.15" >RC6/TX/CK</text>
<line x1="597.70" y1="291.82" x2="615.40" y2="291.82" stroke="#840000" stroke-width="2.2" stroke-linecap="butt"/>
<rect x="601.90" y="284.87" width="3.80" height="3.80" fill="#ff3a3a"/>
<text transform="translate(606.80,290.02) scale(0.8,1)" font-size="8.5" text-anchor="start" fill="#222" stroke="#222" stroke-width="0.15" >26</text>
<text transform="translate(594.50,295.72) scale(0.82,1)" font-size="8.4" text-anchor="end" fill="#222222" stroke="#222222" stroke-width="0.15" >RC7/RX/DT</text>
<line x1="597.70" y1="313.46" x2="615.40" y2="313.46" stroke="#840000" stroke-width="2.2" stroke-linecap="butt"/>
<rect x="601.90" y="306.51" width="3.80" height="3.80" fill="#3a3aff"/>
<text transform="translate(606.80,311.66) scale(0.8,1)" font-size="8.5" text-anchor="start" fill="#222" stroke="#222" stroke-width="0.15" >19</text>
<text transform="translate(594.50,317.36) scale(0.82,1)" font-size="8.4" text-anchor="end" fill="#222222" stroke="#222222" stroke-width="0.15" >RD0/PSP0</text>
<line x1="597.70" y1="324.28" x2="615.40" y2="324.28" stroke="#840000" stroke-width="2.2" stroke-linecap="butt"/>
<rect x="601.90" y="317.33" width="3.80" height="3.80" fill="#ff3a3a"/>
<text transform="translate(606.80,322.48) scale(0.8,1)" font-size="8.5" text-anchor="start" fill="#222" stroke="#222" stroke-width="0.15" >20</text>
<text transform="translate(594.50,328.18) scale(0.82,1)" font-size="8.4" text-anchor="end" fill="#222222" stroke="#222222" stroke-width="0.15" >RD1/PSP1</text>
<line x1="597.70" y1="335.10" x2="615.40" y2="335.10" stroke="#840000" stroke-width="2.2" stroke-linecap="butt"/>
<rect x="601.90" y="328.15" width="3.80" height="3.80" fill="#3a3aff"/>
<text transform="translate(606.80,333.30) scale(0.8,1)" font-size="8.5" text-anchor="start" fill="#222" stroke="#222" stroke-width="0.15" >21</text>
<text transform="translate(594.50,339.00) scale(0.82,1)" font-size="8.4" text-anchor="end" fill="#222222" stroke="#222222" stroke-width="0.15" >RD2/PSP2</text>
<line x1="597.70" y1="345.92" x2="615.40" y2="345.92" stroke="#840000" stroke-width="2.2" stroke-linecap="butt"/>
<rect x="601.90" y="338.97" width="3.80" height="3.80" fill="#8c8c8c"/>
<text transform="translate(606.80,344.12) scale(0.8,1)" font-size="8.5" text-anchor="start" fill="#222" stroke="#222" stroke-width="0.15" >22</text>
<text transform="translate(594.50,349.82) scale(0.82,1)" font-size="8.4" text-anchor="end" fill="#222222" stroke="#222222" stroke-width="0.15" >RD3/PSP3</text>
<line x1="597.70" y1="356.74" x2="615.40" y2="356.74" stroke="#840000" stroke-width="2.2" stroke-linecap="butt"/>
<rect x="601.90" y="349.79" width="3.80" height="3.80" fill="#ff3a3a"/>
<text transform="translate(606.80,354.94) scale(0.8,1)" font-size="8.5" text-anchor="start" fill="#222" stroke="#222" stroke-width="0.15" >27</text>
<text transform="translate(594.50,360.64) scale(0.82,1)" font-size="8.4" text-anchor="end" fill="#222222" stroke="#222222" stroke-width="0.15" >RD4/PSP4</text>
<line x1="597.70" y1="367.56" x2="615.40" y2="367.56" stroke="#840000" stroke-width="2.2" stroke-linecap="butt"/>
<rect x="601.90" y="360.61" width="3.80" height="3.80" fill="#ff3a3a"/>
<text transform="translate(606.80,365.76) scale(0.8,1)" font-size="8.5" text-anchor="start" fill="#222" stroke="#222" stroke-width="0.15" >28</text>
<text transform="translate(594.50,371.46) scale(0.82,1)" font-size="8.4" text-anchor="end" fill="#222222" stroke="#222222" stroke-width="0.15" >RD5/PSP5</text>
<line x1="597.70" y1="378.38" x2="615.40" y2="378.38" stroke="#840000" stroke-width="2.2" stroke-linecap="butt"/>
<rect x="601.90" y="371.43" width="3.80" height="3.80" fill="#ff3a3a"/>
<text transform="translate(606.80,376.58) scale(0.8,1)" font-size="8.5" text-anchor="start" fill="#222" stroke="#222" stroke-width="0.15" >29</text>
<text transform="translate(594.50,382.28) scale(0.82,1)" font-size="8.4" text-anchor="end" fill="#222222" stroke="#222222" stroke-width="0.15" >RD6/PSP6</text>
<line x1="597.70" y1="389.20" x2="615.40" y2="389.20" stroke="#840000" stroke-width="2.2" stroke-linecap="butt"/>
<rect x="601.90" y="382.25" width="3.80" height="3.80" fill="#3a3aff"/>
<text transform="translate(606.80,387.40) scale(0.8,1)" font-size="8.5" text-anchor="start" fill="#222" stroke="#222" stroke-width="0.15" >30</text>
<text transform="translate(594.50,393.10) scale(0.82,1)" font-size="8.4" text-anchor="end" fill="#222222" stroke="#222222" stroke-width="0.15" >RD7/PSP7</text>
<text transform="translate(473.00,410.80) scale(0.76,1)" font-size="9.2" text-anchor="start" fill="#222222" stroke="#222222" stroke-width="0.15" >PIC16F877A</text>
<line x1="508.80" y1="221.60" x2="518.80" y2="221.60" stroke="#2a2a2a" stroke-width="1.0" stroke-linecap="butt"/>
<line x1="508.80" y1="232.50" x2="519.60" y2="232.50" stroke="#2a2a2a" stroke-width="1.0" stroke-linecap="butt"/>
<line x1="477.90" y1="264.90" x2="497.40" y2="264.90" stroke="#2a2a2a" stroke-width="1.0" stroke-linecap="butt"/>
<line x1="509.40" y1="199.80" x2="517.40" y2="199.80" stroke="#2a2a2a" stroke-width="1.0" stroke-linecap="butt"/>
<line x1="615.40" y1="248.54" x2="673.50" y2="248.54" stroke="#003a00" stroke-width="2.2" stroke-linecap="square"/>
<line x1="615.40" y1="259.36" x2="673.50" y2="259.36" stroke="#003a00" stroke-width="2.2" stroke-linecap="square"/>
<line x1="648.40" y1="152.20" x2="648.40" y2="184.00" stroke="#003a00" stroke-width="2.2" stroke-linecap="butt"/>
<polygon points="647.90,152.00 648.90,152.00 651.90,160.50 644.90,160.50" fill="none" stroke="#003a00" stroke-width="1.7"/>
<line x1="639.30" y1="183.60" x2="656.80" y2="183.60" stroke="#840000" stroke-width="2.2" stroke-linecap="butt"/>
<rect x="645.80" y="181.50" width="5.20" height="5.20" fill="#003a00"/>
<line x1="639.60" y1="183.60" x2="639.60" y2="194.20" stroke="#840000" stroke-width="2.2" stroke-linecap="butt"/>
<rect x="635.90" y="194.20" width="7.40" height="32.90" fill="#cdcbb1" stroke="#840000" stroke-width="2.2" stroke-linejoin="round"/>
<line x1="639.60" y1="227.10" x2="639.60" y2="238.50" stroke="#840000" stroke-width="2.2" stroke-linecap="butt"/>
<line x1="656.60" y1="183.60" x2="656.60" y2="194.20" stroke="#840000" stroke-width="2.2" stroke-linecap="butt"/>
<rect x="652.90" y="194.20" width="7.40" height="32.90" fill="#cdcbb1" stroke="#840000" stroke-width="2.2" stroke-linejoin="round"/>
<line x1="656.60" y1="227.10" x2="656.60" y2="238.50" stroke="#840000" stroke-width="2.2" stroke-linecap="butt"/>
<rect x="634.00" y="180.60" width="3.80" height="4.60" fill="#ff3a3a"/>
<rect x="650.90" y="180.60" width="3.80" height="4.60" fill="#ff3a3a"/>
<rect x="634.00" y="235.00" width="3.80" height="4.60" fill="#ff3a3a"/>
<rect x="650.90" y="235.00" width="3.80" height="4.60" fill="#ff3a3a"/>
<line x1="639.60" y1="238.50" x2="639.60" y2="248.54" stroke="#003a00" stroke-width="2.2" stroke-linecap="square"/>
<line x1="656.60" y1="238.50" x2="656.60" y2="259.36" stroke="#003a00" stroke-width="2.2" stroke-linecap="square"/>
<rect x="637.00" y="246.24" width="5.20" height="5.20" fill="#003a00"/>
<rect x="654.00" y="257.06" width="5.20" height="5.20" fill="#003a00"/>
<text transform="translate(632.70,186.00) scale(0.8,1)" font-size="8.5" text-anchor="end" fill="#222222" stroke="#222222" stroke-width="0.15" >4K</text>
<text transform="translate(665.80,186.00) scale(0.8,1)" font-size="8.5" text-anchor="start" fill="#222222" stroke="#222222" stroke-width="0.15" >4K</text>
<g stroke="#2030d0" stroke-width="1.1" fill="none"><polygon points="632.3,254.5 635.3,259.4 632.3,264.3 629.3,259.4"/><line x1="627.8" y1="259.4" x2="636.8" y2="259.4"/><line x1="632.3" y1="253" x2="632.3" y2="265.5"/></g>
<polyline points="615.40,281.00 639.70,281.00 639.70,433.20 706.60,433.20" fill="none" stroke="#003a00" stroke-width="2.2" stroke-linejoin="miter" stroke-linecap="square"/>
<polyline points="615.40,291.82 631.80,291.82 631.80,454.70 706.60,454.70" fill="none" stroke="#003a00" stroke-width="2.2" stroke-linejoin="miter" stroke-linecap="square"/>
<polyline points="615.40,313.46 840.00,313.46 840.00,228.00" fill="none" stroke="#003a00" stroke-width="2.2" stroke-linejoin="miter" stroke-linecap="square"/>
<polyline points="615.40,324.28 823.30,324.28 823.30,228.00" fill="none" stroke="#003a00" stroke-width="2.2" stroke-linejoin="miter" stroke-linecap="square"/>
<polyline points="615.40,335.10 831.70,335.10 831.70,228.00" fill="none" stroke="#003a00" stroke-width="2.2" stroke-linejoin="miter" stroke-linecap="square"/>
<polyline points="615.40,356.74 890.00,356.74 890.00,228.00" fill="none" stroke="#003a00" stroke-width="2.2" stroke-linejoin="miter" stroke-linecap="square"/>
<polyline points="615.40,367.56 898.40,367.56 898.40,228.00" fill="none" stroke="#003a00" stroke-width="2.2" stroke-linejoin="miter" stroke-linecap="square"/>
<polyline points="615.40,378.38 906.70,378.38 906.70,228.00" fill="none" stroke="#003a00" stroke-width="2.2" stroke-linejoin="miter" stroke-linecap="square"/>
<polyline points="615.40,389.20 915.00,389.20 915.00,228.00" fill="none" stroke="#003a00" stroke-width="2.2" stroke-linejoin="miter" stroke-linecap="square"/>
<line x1="424.20" y1="270.18" x2="456.30" y2="270.18" stroke="#003a00" stroke-width="2.2" stroke-linecap="square"/>
<rect x="689.80" y="237.90" width="41.50" height="43.00" fill="#cdcbb1" stroke="#840000" stroke-width="2.2" stroke-linejoin="round"/>
<line x1="673.50" y1="248.54" x2="689.80" y2="248.54" stroke="#840000" stroke-width="2.2" stroke-linecap="butt"/>
<line x1="731.30" y1="248.54" x2="748.90" y2="248.54" stroke="#840000" stroke-width="2.2" stroke-linecap="butt"/>
<line x1="748.90" y1="248.54" x2="757.10" y2="248.54" stroke="#003a00" stroke-width="2.2" stroke-linecap="square"/>
<text transform="translate(693.80,252.74) scale(0.82,1)" font-size="8.8" text-anchor="start" fill="#222222" stroke="#222222" stroke-width="0.15" >SCK</text>
<text transform="translate(728.00,252.74) scale(0.82,1)" font-size="8.8" text-anchor="end" fill="#222222" stroke="#222222" stroke-width="0.15" >A0</text>
<line x1="673.50" y1="259.36" x2="689.80" y2="259.36" stroke="#840000" stroke-width="2.2" stroke-linecap="butt"/>
<line x1="731.30" y1="259.36" x2="748.90" y2="259.36" stroke="#840000" stroke-width="2.2" stroke-linecap="butt"/>
<line x1="748.90" y1="259.36" x2="757.10" y2="259.36" stroke="#003a00" stroke-width="2.2" stroke-linecap="square"/>
<text transform="translate(693.80,263.56) scale(0.82,1)" font-size="8.8" text-anchor="start" fill="#222222" stroke="#222222" stroke-width="0.15" >SDA</text>
<text transform="translate(728.00,263.56) scale(0.82,1)" font-size="8.8" text-anchor="end" fill="#222222" stroke="#222222" stroke-width="0.15" >A1</text>
<line x1="673.50" y1="270.18" x2="689.80" y2="270.18" stroke="#840000" stroke-width="2.2" stroke-linecap="butt"/>
<line x1="731.30" y1="270.18" x2="748.90" y2="270.18" stroke="#840000" stroke-width="2.2" stroke-linecap="butt"/>
<line x1="748.90" y1="270.18" x2="757.10" y2="270.18" stroke="#003a00" stroke-width="2.2" stroke-linecap="square"/>
<text transform="translate(693.80,274.38) scale(0.82,1)" font-size="8.8" text-anchor="start" fill="#222222" stroke="#222222" stroke-width="0.15" >WP</text>
<text transform="translate(728.00,274.38) scale(0.82,1)" font-size="8.8" text-anchor="end" fill="#222222" stroke="#222222" stroke-width="0.15" >A2</text>
<rect x="683.00" y="241.34" width="3.60" height="4.40" fill="#ff3a3a"/>
<text transform="translate(682.30,247.54) scale(0.8,1)" font-size="8.5" text-anchor="end" fill="#222" stroke="#222" stroke-width="0.15" >6</text>
<rect x="683.00" y="252.16" width="3.60" height="4.40" fill="#ff3a3a"/>
<text transform="translate(682.30,258.36) scale(0.8,1)" font-size="8.5" text-anchor="end" fill="#222" stroke="#222" stroke-width="0.15" >5</text>
<rect x="683.00" y="262.98" width="3.60" height="4.40" fill="#3a3aff"/>
<text transform="translate(682.30,269.18) scale(0.8,1)" font-size="8.5" text-anchor="end" fill="#222" stroke="#222" stroke-width="0.15" >7</text>
<rect x="735.60" y="241.34" width="3.60" height="4.40" fill="#3a3aff"/>
<text transform="translate(739.80,247.54) scale(0.8,1)" font-size="8.5" text-anchor="start" fill="#222" stroke="#222" stroke-width="0.15" >1</text>
<rect x="735.60" y="252.16" width="3.60" height="4.40" fill="#3a3aff"/>
<text transform="translate(739.80,258.36) scale(0.8,1)" font-size="8.5" text-anchor="start" fill="#222" stroke="#222" stroke-width="0.15" >2</text>
<rect x="735.60" y="262.98" width="3.60" height="4.40" fill="#3a3aff"/>
<text transform="translate(739.80,269.18) scale(0.8,1)" font-size="8.5" text-anchor="start" fill="#222" stroke="#222" stroke-width="0.15" >3</text>
<text transform="translate(689.30,291.60) scale(0.8,1)" font-size="8.6" text-anchor="start" fill="#222222" stroke="#222222" stroke-width="0.15" >24LC32A</text>
<polyline points="673.50,270.18 673.50,302.80 757.10,302.80 757.10,248.54" fill="none" stroke="#003a00" stroke-width="2.2" stroke-linejoin="miter" stroke-linecap="square"/>
<rect x="754.50" y="257.06" width="5.20" height="5.20" fill="#003a00"/>
<rect x="754.50" y="267.88" width="5.20" height="5.20" fill="#003a00"/>
<line x1="757.10" y1="270.18" x2="798.60" y2="270.18" stroke="#003a00" stroke-width="2.2" stroke-linecap="square"/>
<rect x="796.00" y="267.88" width="5.20" height="5.20" fill="#003a00"/>
<rect x="772.80" y="118.20" width="167.20" height="86.20" fill="#cdcbb1" stroke="#840000" stroke-width="2.2" stroke-linejoin="round"/>
<rect x="781.9" y="127.7" width="149.7" height="47.9" fill="#94aa00" stroke="#1a1a00" stroke-width="1.6"/>
<path d="M790.65,133.35h0M790.65,133.35h0.99M791.64,133.35h0M791.64,133.35h0.99M792.63,133.35h0M792.63,133.35h0.99M792.63,133.35v1.97M793.62,133.35h0M793.62,133.35h0.99M794.61,133.35h0M792.63,135.32h0M792.63,135.32v1.97M792.63,137.29h0M792.63,137.29v1.97M792.63,139.26h0M792.63,139.26v1.97M792.63,141.23h0M792.63,141.23v1.97M792.63,143.20h0M792.63,143.20v1.97M792.63,145.17h0M799.99,137.29h0M799.99,137.29h0.99M799.99,137.29l-0.99,1.97M800.98,137.29h0M800.98,137.29h0.99M801.97,137.29h0M801.97,137.29l0.99,1.97M799.00,139.26h0M799.00,139.26v1.97M802.96,139.26h0M802.96,139.26v1.97M799.00,141.23h0M799.00,141.23h0.99M799.00,141.23v1.97M799.99,141.23h0M799.99,141.23h0.99M800.98,141.23h0M800.98,141.23h0.99M801.97,141.23h0M801.97,141.23h0.99M802.96,141.23h0M799.00,143.20h0M799.00,143.20l0.99,1.97M799.99,145.17h0M799.99,145.17h0.99M800.98,145.17h0M800.98,145.17h0.99M801.97,145.17h0M807.35,137.29h0M807.35,137.29h0.99M807.35,137.29v1.97M808.34,137.29h0M808.34,137.29l0.99,1.97M810.32,137.29h0M810.32,137.29l0.99,1.97M810.32,137.29l-0.99,1.97M807.35,139.26h0M807.35,139.26v1.97M809.33,139.26h0M809.33,139.26v1.97M811.31,139.26h0M811.31,139.26v1.97M807.35,141.23h0M807.35,141.23v1.97M809.33,141.23h0M811.31,141.23h0M811.31,141.23v1.97M807.35,143.20h0M807.35,143.20v1.97M811.31,143.20h0M811.31,143.20v1.97M807.35,145.17h0M811.31,145.17h0M815.70,137.29h0M815.70,137.29h0.99M815.70,137.29v1.97M816.69,137.29h0M816.69,137.29h0.99M817.68,137.29h0M817.68,137.29h0.99M818.67,137.29h0M818.67,137.29l0.99,1.97M815.70,139.26h0M815.70,139.26v1.97M819.66,139.26h0M819.66,139.26l-0.99,1.97M815.70,141.23h0M815.70,141.23h0.99M815.70,141.23v1.97M816.69,141.23h0M816.69,141.23h0.99M817.68,141.23h0M817.68,141.23h0.99M818.67,141.23h0M815.70,143.20h0M815.70,143.20v1.97M815.70,145.17h0M825.04,137.29h0M825.04,137.29h0.99M825.04,137.29l-0.99,1.97M826.03,137.29h0M826.03,137.29h0.99M827.02,137.29h0M827.02,137.29l0.99,1.97M824.05,139.26h0M824.05,139.26v1.97M828.01,139.26h0M828.01,139.26v1.97M824.05,141.23h0M824.05,141.23h0.99M824.05,141.23v1.97M825.04,141.23h0M825.04,141.23h0.99M826.03,141.23h0M826.03,141.23h0.99M827.02,141.23h0M827.02,141.23h0.99M828.01,141.23h0M824.05,143.20h0M824.05,143.20l0.99,1.97M825.04,145.17h0M825.04,145.17h0.99M826.03,145.17h0M826.03,145.17h0.99M827.02,145.17h0M832.40,137.29h0M832.40,137.29v1.97M834.38,137.29h0M834.38,137.29h0.99M834.38,137.29l-0.99,1.97M835.37,137.29h0M835.37,137.29l0.99,1.97M832.40,139.26h0M832.40,139.26h0.99M832.40,139.26v1.97M833.39,139.26h0M836.36,139.26h0M832.40,141.23h0M832.40,141.23v1.97M832.40,143.20h0M832.40,143.20v1.97M832.40,145.17h0M841.74,137.29h0M841.74,137.29h0.99M842.73,137.29h0M842.73,137.29h0.99M843.72,137.29h0M843.72,137.29l0.99,1.97M844.71,139.26h0M844.71,139.26v1.97M841.74,141.23h0M841.74,141.23h0.99M841.74,141.23l-0.99,1.97M842.73,141.23h0M842.73,141.23h0.99M843.72,141.23h0M843.72,141.23h0.99M844.71,141.23h0M844.71,141.23v1.97M840.75,143.20h0M840.75,143.20l0.99,1.97M844.71,143.20h0M844.71,143.20v1.97M841.74,145.17h0M841.74,145.17h0.99M842.73,145.17h0M842.73,145.17h0.99M843.72,145.17h0M843.72,145.17h0.99M844.71,145.17h0M850.09,133.35h0M850.09,133.35v1.97M850.09,135.32h0M850.09,135.32v1.97M849.10,137.29h0M849.10,137.29h0.99M850.09,137.29h0M850.09,137.29h0.99M850.09,137.29v1.97M851.08,137.29h0M850.09,139.26h0M850.09,139.26v1.97M850.09,141.23h0M850.09,141.23v1.97M850.09,143.20h0M850.09,143.20l0.99,1.97M853.06,143.20h0M853.06,143.20l-0.99,1.97M851.08,145.17h0M851.08,145.17h0.99M852.07,145.17h0M857.45,137.29h0M857.45,137.29v1.97M861.41,137.29h0M861.41,137.29v1.97M857.45,139.26h0M857.45,139.26v1.97M861.41,139.26h0M861.41,139.26v1.97M857.45,141.23h0M857.45,141.23v1.97M861.41,141.23h0M861.41,141.23v1.97M857.45,143.20h0M857.45,143.20l0.99,1.97M860.42,143.20h0M860.42,143.20h0.99M860.42,143.20l-0.99,1.97M861.41,143.20h0M861.41,143.20v1.97M858.44,145.17h0M858.44,145.17h0.99M859.43,145.17h0M861.41,145.17h0M865.80,137.29h0M865.80,137.29v1.97M867.78,137.29h0M867.78,137.29h0.99M867.78,137.29l-0.99,1.97M868.77,137.29h0M868.77,137.29l0.99,1.97M865.80,139.26h0M865.80,139.26h0.99M865.80,139.26v1.97M866.79,139.26h0M869.76,139.26h0M865.80,141.23h0M865.80,141.23v1.97M865.80,143.20h0M865.80,143.20v1.97M865.80,145.17h0M875.14,137.29h0M875.14,137.29h0.99M876.13,137.29h0M876.13,137.29h0.99M877.12,137.29h0M877.12,137.29l0.99,1.97M878.11,139.26h0M878.11,139.26v1.97M875.14,141.23h0M875.14,141.23h0.99M875.14,141.23l-0.99,1.97M876.13,141.23h0M876.13,141.23h0.99M877.12,141.23h0M877.12,141.23h0.99M878.11,141.23h0M878.11,141.23v1.97M874.15,143.20h0M874.15,143.20l0.99,1.97M878.11,143.20h0M878.11,143.20v1.97M875.14,145.17h0M875.14,145.17h0.99M876.13,145.17h0M876.13,145.17h0.99M877.12,145.17h0M877.12,145.17h0.99M878.11,145.17h0M882.50,137.29h0M882.50,137.29h0.99M883.49,137.29h0M883.49,137.29h0.99M884.48,137.29h0M884.48,137.29h0.99M885.47,137.29h0M885.47,137.29h0.99M886.46,137.29h0M882.50,141.23h0M882.50,141.23h0.99M883.49,141.23h0M883.49,141.23h0.99M884.48,141.23h0M884.48,141.23h0.99M885.47,141.23h0M885.47,141.23h0.99M886.46,141.23h0M899.20,133.35h0M899.20,133.35h0.99M900.19,133.35h0M900.19,133.35h0.99M901.18,133.35h0M901.18,133.35h0.99M902.17,133.35h0M902.17,133.35h0.99M902.17,133.35v1.97M903.16,133.35h0M902.17,135.32h0M902.17,135.32l-0.99,1.97M901.18,137.29h0M901.18,137.29l0.99,1.97M902.17,139.26h0M902.17,139.26l0.99,1.97M903.16,141.23h0M903.16,141.23v1.97M899.20,143.20h0M899.20,143.20l0.99,1.97M903.16,143.20h0M903.16,143.20l-0.99,1.97M900.19,145.17h0M900.19,145.17h0.99M901.18,145.17h0M901.18,145.17h0.99M902.17,145.17h0M907.55,133.35h0M907.55,133.35h0.99M908.54,133.35h0M908.54,133.35h0.99M909.53,133.35h0M909.53,133.35h0.99M910.52,133.35h0M910.52,133.35h0.99M911.51,133.35h0M911.51,133.35v1.97M911.51,135.32h0M911.51,135.32l-0.99,1.97M910.52,137.29h0M910.52,137.29l-0.99,1.97M909.53,139.26h0M909.53,139.26l-0.99,1.97M908.54,141.23h0M908.54,141.23v1.97M908.54,143.20h0M908.54,143.20v1.97M908.54,145.17h0M916.89,133.35h0M916.89,133.35h0.99M916.89,133.35l-0.99,1.97M917.88,133.35h0M917.88,133.35h0.99M918.87,133.35h0M918.87,133.35l0.99,1.97M915.90,135.32h0M915.90,135.32v1.97M919.86,135.32h0M915.90,137.29h0M915.90,137.29v1.97M915.90,139.26h0M915.90,139.26v1.97M915.90,141.23h0M915.90,141.23v1.97M915.90,143.20h0M915.90,143.20l0.99,1.97M919.86,143.20h0M919.86,143.20l-0.99,1.97M916.89,145.17h0M916.89,145.17h0.99M917.88,145.17h0M917.88,145.17h0.99M918.87,145.17h0" fill="none" stroke="#101000" stroke-width="1.3" stroke-linecap="square"/>
<line x1="790.00" y1="204.40" x2="790.00" y2="228.00" stroke="#840000" stroke-width="2.2" stroke-linecap="butt"/>
<rect x="784.10" y="210.25" width="3.80" height="4.50" fill="#3a3aff"/>
<text transform="translate(793.60,199.40) rotate(-90) scale(1.18,1)" font-size="7.2" text-anchor="start" fill="#222" stroke="#222" stroke-width="0.15" >VSS</text>
<text transform="translate(789.00,216.20) rotate(-90) scale(1.2,1)" font-size="6.6" text-anchor="end" fill="#2a2a2a" stroke="#2a2a2a" stroke-width="0.15" >1</text>
<line x1="798.34" y1="204.40" x2="798.34" y2="228.00" stroke="#840000" stroke-width="2.2" stroke-linecap="butt"/>
<rect x="792.44" y="210.25" width="3.80" height="4.50" fill="#ff3a3a"/>
<text transform="translate(801.94,199.40) rotate(-90) scale(1.18,1)" font-size="7.2" text-anchor="start" fill="#222" stroke="#222" stroke-width="0.15" >VDD</text>
<text transform="translate(797.34,216.20) rotate(-90) scale(1.2,1)" font-size="6.6" text-anchor="end" fill="#2a2a2a" stroke="#2a2a2a" stroke-width="0.15" >2</text>
<line x1="806.67" y1="204.40" x2="806.67" y2="228.00" stroke="#840000" stroke-width="2.2" stroke-linecap="butt"/>
<rect x="800.77" y="210.25" width="3.80" height="4.50" fill="#3a3aff"/>
<text transform="translate(810.27,199.40) rotate(-90) scale(1.18,1)" font-size="7.2" text-anchor="start" fill="#222" stroke="#222" stroke-width="0.15" >VEE</text>
<text transform="translate(805.67,216.20) rotate(-90) scale(1.2,1)" font-size="6.6" text-anchor="end" fill="#2a2a2a" stroke="#2a2a2a" stroke-width="0.15" >3</text>
<line x1="823.34" y1="204.40" x2="823.34" y2="228.00" stroke="#840000" stroke-width="2.2" stroke-linecap="butt"/>
<rect x="817.44" y="210.25" width="3.80" height="4.50" fill="#ff3a3a"/>
<text transform="translate(826.94,199.40) rotate(-90) scale(1.18,1)" font-size="7.2" text-anchor="start" fill="#222" stroke="#222" stroke-width="0.15" >RS</text>
<text transform="translate(822.34,216.20) rotate(-90) scale(1.2,1)" font-size="6.6" text-anchor="end" fill="#2a2a2a" stroke="#2a2a2a" stroke-width="0.15" >4</text>
<line x1="831.67" y1="204.40" x2="831.67" y2="228.00" stroke="#840000" stroke-width="2.2" stroke-linecap="butt"/>
<rect x="825.77" y="210.25" width="3.80" height="4.50" fill="#3a3aff"/>
<text transform="translate(835.27,199.40) rotate(-90) scale(1.18,1)" font-size="7.2" text-anchor="start" fill="#222" stroke="#222" stroke-width="0.15" >RW</text>
<text transform="translate(830.67,216.20) rotate(-90) scale(1.2,1)" font-size="6.6" text-anchor="end" fill="#2a2a2a" stroke="#2a2a2a" stroke-width="0.15" >5</text>
<line x1="840.01" y1="204.40" x2="840.01" y2="228.00" stroke="#840000" stroke-width="2.2" stroke-linecap="butt"/>
<rect x="834.11" y="210.25" width="3.80" height="4.50" fill="#3a3aff"/>
<text transform="translate(843.61,199.40) rotate(-90) scale(1.18,1)" font-size="7.2" text-anchor="start" fill="#222" stroke="#222" stroke-width="0.15" >E</text>
<text transform="translate(839.01,216.20) rotate(-90) scale(1.2,1)" font-size="6.6" text-anchor="end" fill="#2a2a2a" stroke="#2a2a2a" stroke-width="0.15" >6</text>
<line x1="856.68" y1="204.40" x2="856.68" y2="228.00" stroke="#840000" stroke-width="2.2" stroke-linecap="butt"/>
<rect x="850.78" y="210.25" width="3.80" height="4.50" fill="#8c8c8c"/>
<text transform="translate(860.28,199.40) rotate(-90) scale(1.18,1)" font-size="7.2" text-anchor="start" fill="#222" stroke="#222" stroke-width="0.15" >D0</text>
<text transform="translate(855.68,216.20) rotate(-90) scale(1.2,1)" font-size="6.6" text-anchor="end" fill="#2a2a2a" stroke="#2a2a2a" stroke-width="0.15" >7</text>
<line x1="865.01" y1="204.40" x2="865.01" y2="228.00" stroke="#840000" stroke-width="2.2" stroke-linecap="butt"/>
<rect x="859.12" y="210.25" width="3.80" height="4.50" fill="#8c8c8c"/>
<text transform="translate(868.62,199.40) rotate(-90) scale(1.18,1)" font-size="7.2" text-anchor="start" fill="#222" stroke="#222" stroke-width="0.15" >D1</text>
<text transform="translate(864.01,216.20) rotate(-90) scale(1.2,1)" font-size="6.6" text-anchor="end" fill="#2a2a2a" stroke="#2a2a2a" stroke-width="0.15" >8</text>
<line x1="873.35" y1="204.40" x2="873.35" y2="228.00" stroke="#840000" stroke-width="2.2" stroke-linecap="butt"/>
<rect x="867.45" y="210.25" width="3.80" height="4.50" fill="#8c8c8c"/>
<text transform="translate(876.95,199.40) rotate(-90) scale(1.18,1)" font-size="7.2" text-anchor="start" fill="#222" stroke="#222" stroke-width="0.15" >D2</text>
<text transform="translate(872.35,216.20) rotate(-90) scale(1.2,1)" font-size="6.6" text-anchor="end" fill="#2a2a2a" stroke="#2a2a2a" stroke-width="0.15" >9</text>
<line x1="881.68" y1="204.40" x2="881.68" y2="228.00" stroke="#840000" stroke-width="2.2" stroke-linecap="butt"/>
<rect x="875.78" y="210.25" width="3.80" height="4.50" fill="#8c8c8c"/>
<text transform="translate(885.28,199.40) rotate(-90) scale(1.18,1)" font-size="7.2" text-anchor="start" fill="#222" stroke="#222" stroke-width="0.15" >D3</text>
<text transform="translate(880.68,216.20) rotate(-90) scale(1.2,1)" font-size="6.6" text-anchor="end" fill="#2a2a2a" stroke="#2a2a2a" stroke-width="0.15" >10</text>
<line x1="890.02" y1="204.40" x2="890.02" y2="228.00" stroke="#840000" stroke-width="2.2" stroke-linecap="butt"/>
<rect x="884.12" y="210.25" width="3.80" height="4.50" fill="#ff3a3a"/>
<text transform="translate(893.62,199.40) rotate(-90) scale(1.18,1)" font-size="7.2" text-anchor="start" fill="#222" stroke="#222" stroke-width="0.15" >D4</text>
<text transform="translate(889.02,216.20) rotate(-90) scale(1.2,1)" font-size="6.6" text-anchor="end" fill="#2a2a2a" stroke="#2a2a2a" stroke-width="0.15" >11</text>
<line x1="898.36" y1="204.40" x2="898.36" y2="228.00" stroke="#840000" stroke-width="2.2" stroke-linecap="butt"/>
<rect x="892.46" y="210.25" width="3.80" height="4.50" fill="#ff3a3a"/>
<text transform="translate(901.96,199.40) rotate(-90) scale(1.18,1)" font-size="7.2" text-anchor="start" fill="#222" stroke="#222" stroke-width="0.15" >D5</text>
<text transform="translate(897.36,216.20) rotate(-90) scale(1.2,1)" font-size="6.6" text-anchor="end" fill="#2a2a2a" stroke="#2a2a2a" stroke-width="0.15" >12</text>
<line x1="906.69" y1="204.40" x2="906.69" y2="228.00" stroke="#840000" stroke-width="2.2" stroke-linecap="butt"/>
<rect x="900.79" y="210.25" width="3.80" height="4.50" fill="#ff3a3a"/>
<text transform="translate(910.29,199.40) rotate(-90) scale(1.18,1)" font-size="7.2" text-anchor="start" fill="#222" stroke="#222" stroke-width="0.15" >D6</text>
<text transform="translate(905.69,216.20) rotate(-90) scale(1.2,1)" font-size="6.6" text-anchor="end" fill="#2a2a2a" stroke="#2a2a2a" stroke-width="0.15" >13</text>
<line x1="915.02" y1="204.40" x2="915.02" y2="228.00" stroke="#840000" stroke-width="2.2" stroke-linecap="butt"/>
<rect x="909.12" y="210.25" width="3.80" height="4.50" fill="#3a3aff"/>
<text transform="translate(918.62,199.40) rotate(-90) scale(1.18,1)" font-size="7.2" text-anchor="start" fill="#222" stroke="#222" stroke-width="0.15" >D7</text>
<text transform="translate(914.02,216.20) rotate(-90) scale(1.2,1)" font-size="6.6" text-anchor="end" fill="#2a2a2a" stroke="#2a2a2a" stroke-width="0.15" >14</text>
<polyline points="790.00,228.00 790.00,249.10 806.70,249.10 806.70,228.00" fill="none" stroke="#003a00" stroke-width="2.2" stroke-linejoin="miter" stroke-linecap="square"/>
<polyline points="798.35,228.00 798.35,238.00 765.20,238.00 765.20,216.00" fill="none" stroke="#003a00" stroke-width="2.2" stroke-linejoin="miter" stroke-linecap="square"/>
<line x1="765.20" y1="206.70" x2="765.20" y2="238.00" stroke="#003a00" stroke-width="2.2" stroke-linecap="butt"/>
<polygon points="764.70,206.50 765.70,206.50 768.70,215.00 761.70,215.00" fill="none" stroke="#003a00" stroke-width="1.7"/>
<line x1="798.60" y1="249.10" x2="798.60" y2="292.10" stroke="#003a00" stroke-width="2.2" stroke-linecap="square"/>
<rect x="796.00" y="246.80" width="5.20" height="5.20" fill="#003a00"/>
<line x1="790.00" y1="292.10" x2="807.20" y2="292.10" stroke="#003a00" stroke-width="2.2" stroke-linecap="butt"/>
<line x1="794.00" y1="297.30" x2="803.20" y2="297.30" stroke="#003a00" stroke-width="2.0" stroke-linecap="butt"/>
<polygon points="798.60,300.90 796.40,303.10 800.80,303.10" fill="#003a00"/>
<line x1="357.00" y1="270.18" x2="381.90" y2="270.18" stroke="#003a00" stroke-width="2.2" stroke-linecap="butt"/>
<line x1="381.90" y1="270.18" x2="389.30" y2="270.18" stroke="#840000" stroke-width="2.2" stroke-linecap="butt"/>
<rect x="389.60" y="265.40" width="26.00" height="9.20" fill="#cdcbb1" stroke="#840000" stroke-width="2.2" stroke-linejoin="round"/>
<line x1="415.60" y1="270.18" x2="424.20" y2="270.18" stroke="#840000" stroke-width="2.2" stroke-linecap="butt"/>
<polygon points="356.6,269.78000000000003 356.6,270.58 364.8,275.38 364.8,264.98" fill="none" stroke="#003a00" stroke-width="1.9"/>
<rect x="379.40" y="262.40" width="4.40" height="5.00" fill="#ff3a3a"/>
<rect x="420.60" y="262.40" width="4.40" height="5.00" fill="#ff3a3a"/>
<text transform="translate(390.00,285.00) scale(0.8,1)" font-size="8.6" text-anchor="start" fill="#222222" stroke="#222222" stroke-width="0.15" >10k</text>
<rect x="437.40" y="267.88" width="5.20" height="5.20" fill="#003a00"/>
<line x1="440.00" y1="270.18" x2="440.00" y2="298.70" stroke="#003a00" stroke-width="2.2" stroke-linecap="butt"/>
<circle cx="440" cy="301.6" r="2.6" fill="none" stroke="#840000" stroke-width="1.6"/>
<circle cx="440" cy="327.2" r="2.6" fill="none" stroke="#840000" stroke-width="1.6"/>
<line x1="433.00" y1="299.30" x2="433.00" y2="329.50" stroke="#840000" stroke-width="1.8" stroke-linecap="butt"/>
<rect x="428.9" y="305.8" width="3.6" height="16.4" fill="#cdcbb1" stroke="#840000" stroke-width="1.6"/>
<line x1="440.00" y1="330.20" x2="440.00" y2="342.00" stroke="#840000" stroke-width="2.2" stroke-linecap="butt"/>
<line x1="440.00" y1="342.00" x2="440.00" y2="357.40" stroke="#003a00" stroke-width="2.2" stroke-linecap="square"/>
<line x1="431.40" y1="357.40" x2="448.60" y2="357.40" stroke="#003a00" stroke-width="2.2" stroke-linecap="butt"/>
<line x1="435.40" y1="362.60" x2="444.60" y2="362.60" stroke="#003a00" stroke-width="2.0" stroke-linecap="butt"/>
<polygon points="440.00,366.20 437.80,368.40 442.20,368.40" fill="#003a00"/>
<ellipse cx="431.4" cy="292.6" rx="3.6" ry="4" fill="#ff1818"/><ellipse cx="431.4" cy="292.6" rx="2" ry="2.6" fill="#ff2020" stroke="#400000" stroke-width="1.2"/>
<rect x="433.40" y="283.00" width="3.80" height="4.60" fill="#ff3a3a"/>
<rect x="433.40" y="338.20" width="3.80" height="4.60" fill="#3a3aff"/>
<rect x="722.90" y="421.50" width="100.60" height="87.70" fill="#cdcbb1" stroke="#840000" stroke-width="2.2" stroke-linejoin="round"/>
<rect x="748.4" y="433.2" width="67.2" height="65.6" fill="#000" stroke="#840000" stroke-width="1.4"/>
<rect x="753.00" y="438.40" width="3.80" height="5.20" fill="#20ff20"/>
<line x1="706.60" y1="433.20" x2="722.90" y2="433.20" stroke="#840000" stroke-width="2.2" stroke-linecap="butt"/>
<rect x="713.10" y="423.70" width="3.80" height="5.00" fill="#3a3aff"/>
<text transform="translate(727.80,437.20) scale(0.78,1)" font-size="9.5" text-anchor="start" fill="#222222" stroke="#222222" stroke-width="0.15" >RXD</text>
<line x1="706.60" y1="454.70" x2="722.90" y2="454.70" stroke="#840000" stroke-width="2.2" stroke-linecap="butt"/>
<rect x="713.10" y="445.20" width="3.80" height="5.00" fill="#ff3a3a"/>
<text transform="translate(727.80,458.70) scale(0.78,1)" font-size="9.5" text-anchor="start" fill="#222222" stroke="#222222" stroke-width="0.15" >TXD</text>
<line x1="706.60" y1="476.20" x2="722.90" y2="476.20" stroke="#840000" stroke-width="2.2" stroke-linecap="butt"/>
<rect x="713.10" y="466.70" width="3.80" height="5.00" fill="#ff3a3a"/>
<text transform="translate(727.80,480.20) scale(0.78,1)" font-size="9.5" text-anchor="start" fill="#222222" stroke="#222222" stroke-width="0.15" >RTS</text>
<line x1="706.60" y1="497.90" x2="722.90" y2="497.90" stroke="#840000" stroke-width="2.2" stroke-linecap="butt"/>
<rect x="713.10" y="488.40" width="3.80" height="5.00" fill="#8c8c8c"/>
<text transform="translate(727.80,501.90) scale(0.78,1)" font-size="9.5" text-anchor="start" fill="#222222" stroke="#222222" stroke-width="0.15" >CTS</text>
<g>
<rect x="8.0" y="291.0" width="369.6" height="267.0" rx="3" ry="3" fill="#bdbdbd"/>
<rect x="8.4" y="291.2" width="368.9" height="36" rx="2.6" ry="2.6" fill="#f2f2f2"/>
<defs><linearGradient id="sep" x1="0" y1="0" x2="0" y2="1"><stop offset="0" stop-color="#e2e2e2"/><stop offset="0.45" stop-color="#d2d2d2"/><stop offset="1" stop-color="#a4a4a4"/></linearGradient><linearGradient id="lb" x1="0" y1="0" x2="1" y2="0"><stop offset="0" stop-color="#c4c4c4"/><stop offset="0.5" stop-color="#d4d4d4"/><stop offset="1" stop-color="#a0a0a0"/></linearGradient></defs>
<rect x="8.40" y="323.80" width="368.80" height="4.40" fill="url(#sep)"/>
<rect x="8.40" y="328.20" width="3.10" height="226.80" fill="url(#lb)"/>
<rect x="11.50" y="328.20" width="348.40" height="224.80" fill="#000000"/>
<rect x="359.90" y="328.20" width="1.20" height="225.60" fill="#ffffff"/>
<rect x="361.10" y="328.20" width="14.50" height="225.60" fill="#efefef"/>
<rect x="375.60" y="328.20" width="1.90" height="227.80" fill="#c0c0c0"/>
<rect x="11.50" y="553.00" width="364.10" height="0.80" fill="#d8d8d8"/>
<rect x="8.4" y="553.6" width="369" height="4.0" rx="2" ry="2" fill="#bebebe"/>
<rect x="10.50" y="553.80" width="365.10" height="2.50" fill="#f4f4f4"/>
<rect x="366.60" y="398.30" width="1.20" height="136.10" fill="#8a8a8a"/>
<rect x="360.90" y="299.00" width="16.00" height="20.80" fill="#dadada"/>
<g stroke="#f0f0f0" stroke-width="0.8"><line x1="366.4" y1="307" x2="370.6" y2="312"/><line x1="370.6" y1="307" x2="366.4" y2="312"/></g>
<text x="16.2" y="312.3" font-size="13" fill="#888888" textLength="69.8" lengthAdjust="spacingAndGlyphs">Virtual Terminal</text>
<text x="16.2" y="339.90" style="font-family:&quot;Liberation Mono&quot;,monospace" font-size="15" textLength="67.6" lengthAdjust="spacingAndGlyphs" fill="#12e812">Temperatura= 36C</text>
<text x="16.2" y="353.18" style="font-family:&quot;Liberation Mono&quot;,monospace" font-size="15" textLength="67.6" lengthAdjust="spacingAndGlyphs" fill="#12e812">Temperatura= 37C</text>
<text x="16.2" y="366.46" style="font-family:&quot;Liberation Mono&quot;,monospace" font-size="15" textLength="67.6" lengthAdjust="spacingAndGlyphs" fill="#12e812">Temperatura= 37C</text>
<text x="16.2" y="379.74" style="font-family:&quot;Liberation Mono&quot;,monospace" font-size="15" textLength="67.6" lengthAdjust="spacingAndGlyphs" fill="#12e812">Temperatura= 37C</text>
<text x="16.2" y="393.02" style="font-family:&quot;Liberation Mono&quot;,monospace" font-size="15" textLength="67.6" lengthAdjust="spacingAndGlyphs" fill="#12e812">Temperatura= 37C</text>
<text x="16.2" y="406.30" style="font-family:&quot;Liberation Mono&quot;,monospace" font-size="15" textLength="67.6" lengthAdjust="spacingAndGlyphs" fill="#12e812">Temperatura= 37C</text>
<text x="16.2" y="419.58" style="font-family:&quot;Liberation Mono&quot;,monospace" font-size="15" textLength="67.6" lengthAdjust="spacingAndGlyphs" fill="#12e812">Temperatura= 37C</text>
<text x="16.2" y="432.86" style="font-family:&quot;Liberation Mono&quot;,monospace" font-size="15" textLength="67.6" lengthAdjust="spacingAndGlyphs" fill="#12e812">Temperatura= 37C</text>
<text x="16.2" y="446.14" style="font-family:&quot;Liberation Mono&quot;,monospace" font-size="15" textLength="67.6" lengthAdjust="spacingAndGlyphs" fill="#12e812">Temperatura= 37C</text>
<text x="16.2" y="459.42" style="font-family:&quot;Liberation Mono&quot;,monospace" font-size="15" textLength="67.6" lengthAdjust="spacingAndGlyphs" fill="#12e812">Temperatura= 37C</text>
<text x="16.2" y="472.70" style="font-family:&quot;Liberation Mono&quot;,monospace" font-size="15" textLength="67.6" lengthAdjust="spacingAndGlyphs" fill="#12e812">Temperatura= 37C</text>
<text x="16.2" y="485.98" style="font-family:&quot;Liberation Mono&quot;,monospace" font-size="15" textLength="67.6" lengthAdjust="spacingAndGlyphs" fill="#12e812">Temperatura= 37C</text>
<text x="16.2" y="499.26" style="font-family:&quot;Liberation Mono&quot;,monospace" font-size="15" textLength="67.6" lengthAdjust="spacingAndGlyphs" fill="#12e812">Temperatura= 37C</text>
<text x="16.2" y="512.54" style="font-family:&quot;Liberation Mono&quot;,monospace" font-size="15" textLength="67.6" lengthAdjust="spacingAndGlyphs" fill="#12e812">Temperatura= 37C</text>
<text x="16.2" y="525.82" style="font-family:&quot;Liberation Mono&quot;,monospace" font-size="15" textLength="67.6" lengthAdjust="spacingAndGlyphs" fill="#12e812">Temperatura= 37C</text>
<text x="16.2" y="539.10" style="font-family:&quot;Liberation Mono&quot;,monospace" font-size="15" textLength="67.6" lengthAdjust="spacingAndGlyphs" fill="#12e812">Temperatura= 37C</text>
</g>
</svg></body></html>
